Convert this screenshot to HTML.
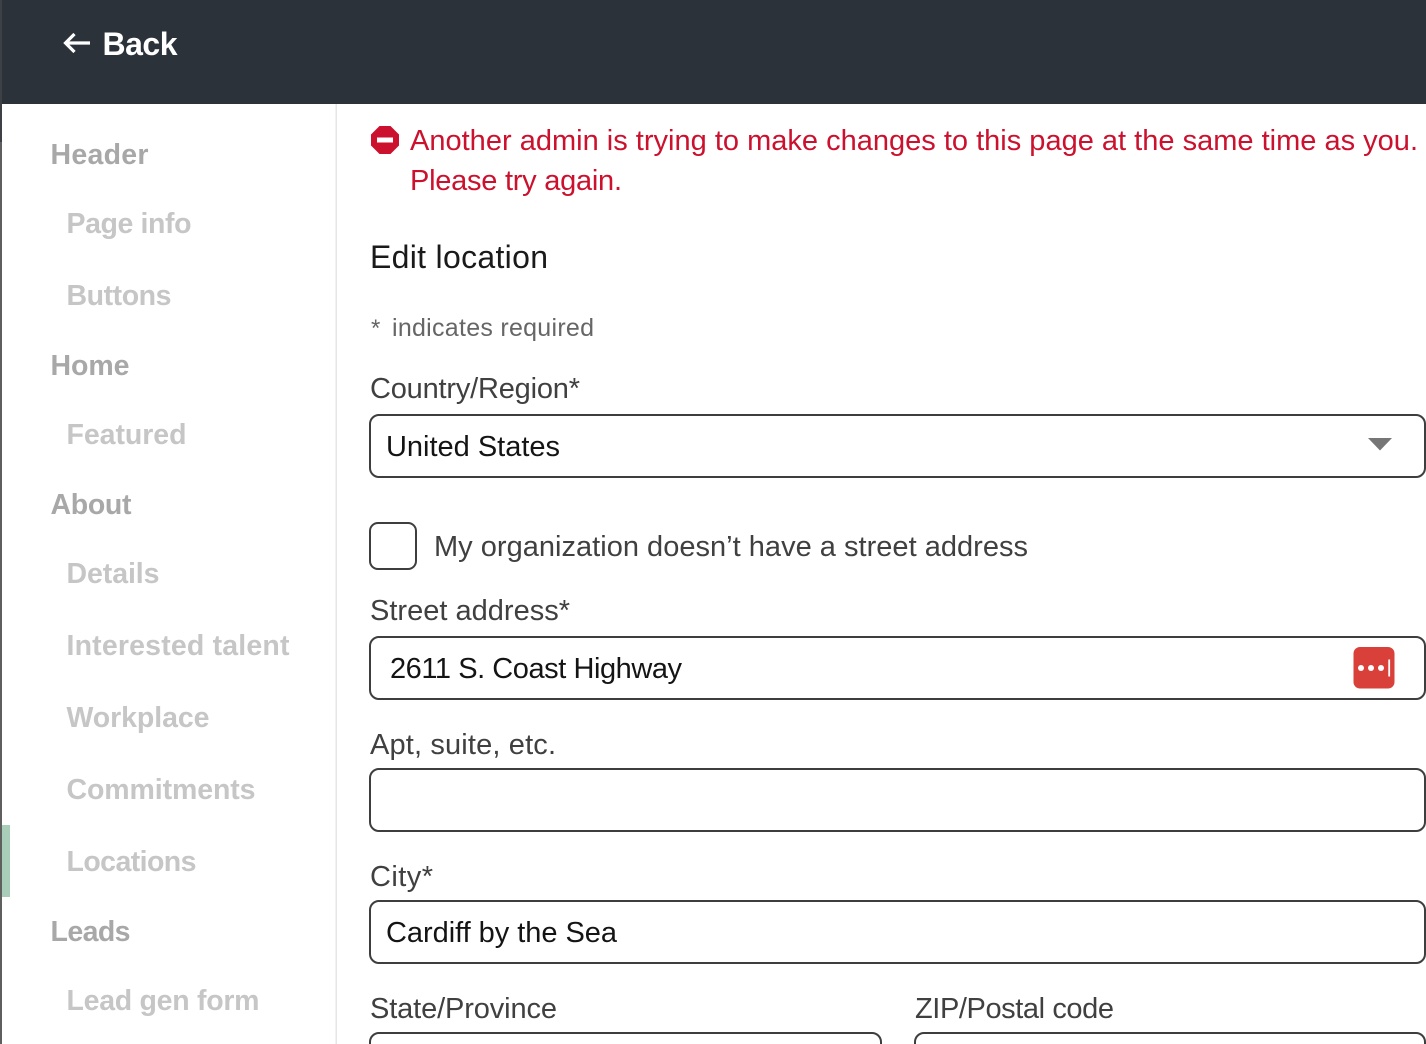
<!DOCTYPE html>
<html>
<head>
<meta charset="utf-8">
<style>
html,body{margin:0;padding:0;background:#fff;width:1426px;height:1044px;overflow:hidden}
svg{display:block;position:absolute;left:0;top:0}
text{font-family:"Liberation Sans",sans-serif;white-space:pre}
.b{font-weight:700;font-size:28.5px}
.h{fill:#a8a8a8}
.s{fill:#c6c6c6}
.t{font-size:29px}
.l{fill:#404040}
.v{fill:#141414}
.e{fill:#cb112d}
.box{fill:#fff;stroke:#3e3e3e;stroke-width:2}
</style>
</head>
<body>
<svg width="1426" height="1044" viewBox="0 0 1426 1044" xmlns="http://www.w3.org/2000/svg">
<rect x="0" y="0" width="1426" height="1044" fill="#fff"/>
<rect x="0" y="104" width="2" height="940" fill="#5f5f5f"/>
<rect x="0" y="0" width="2" height="142" fill="#3d4045"/>
<rect x="2" y="0" width="1424" height="104" fill="#2c323a"/>
<rect x="335.500" y="104" width="1.500" height="940" fill="#e6e6e6"/>
<rect x="2" y="825" width="8" height="72" fill="#a8cdb9"/>

<path d="M65.500 43H90M74.500 34L65.500 43L74.500 52" fill="none" stroke="#fff" stroke-width="3.200"/>
<text x="102.500" y="55" class="b" style="font-size:32px" fill="#fff" textLength="75">Back</text>

<text x="50.500" y="164" class="b h" textLength="98">Header</text>
<text x="66.500" y="233" class="b s" textLength="125">Page info</text>
<text x="66.500" y="305" class="b s" textLength="105">Buttons</text>
<text x="50.500" y="375" class="b h" textLength="79">Home</text>
<text x="66.500" y="444" class="b s" textLength="120">Featured</text>
<text x="50.500" y="514" class="b h" textLength="81">About</text>
<text x="66.500" y="583" class="b s" textLength="93">Details</text>
<text x="66.500" y="655" class="b s" textLength="223">Interested talent</text>
<text x="66.500" y="727" class="b s" textLength="143">Workplace</text>
<text x="66.500" y="799" class="b s" textLength="189">Commitments</text>
<text x="66.500" y="871" class="b s" textLength="130">Locations</text>
<text x="50.500" y="941" class="b h" textLength="80">Leads</text>
<text x="66.500" y="1010" class="b s" textLength="193">Lead gen form</text>

<polygon points="379.500,126 390.500,126 399,134.500 399,145.500 390.500,154 379.500,154 371,145.500 371,134.500" fill="#cb112d"/>
<rect x="377" y="137.500" width="16" height="5" fill="#fff"/>
<text x="410" y="150" class="t e" textLength="1008">Another admin is trying to make changes to this page at the same time as you.</text>
<text x="410" y="190" class="t e" textLength="212">Please try again.</text>

<text x="370" y="268" style="font-size:32px" fill="#1a1a1a" textLength="178">Edit location</text>
<text x="371" y="336" style="font-size:24px" fill="#666" textLength="9">*</text>
<text x="392" y="336" style="font-size:25px" fill="#666" textLength="202">indicates required</text>

<text x="370" y="398" class="t l" textLength="210">Country/Region*</text>
<rect x="370" y="415" width="1055" height="62" rx="9" class="box"/>
<text x="386" y="456" class="t v" textLength="174">United States</text>
<polygon points="1368,438 1392,438 1380,450.500" fill="#767676"/>

<rect x="370" y="523" width="46" height="46" rx="8" class="box"/>
<text x="434" y="556" class="t l" textLength="594">My organization doesn’t have a street address</text>

<text x="370" y="620" class="t l" textLength="200">Street address*</text>
<rect x="370" y="637" width="1055" height="62" rx="9" class="box"/>
<text x="390" y="678" class="t v" textLength="292">2611 S. Coast Highway</text>
<rect x="1353.500" y="647" width="41" height="41.500" rx="6.500" fill="#d9403a"/>
<circle cx="1361" cy="668" r="3" fill="#fff"/>
<circle cx="1371" cy="668" r="3" fill="#fff"/>
<circle cx="1381" cy="668" r="3" fill="#fff"/>
<rect x="1388.300" y="659.500" width="1.800" height="17" fill="#fff"/>

<text x="370" y="754" class="t l" textLength="186">Apt, suite, etc.</text>
<rect x="370" y="769" width="1055" height="62" rx="9" class="box"/>

<text x="370" y="886" class="t l" textLength="63">City*</text>
<rect x="370" y="901" width="1055" height="62" rx="9" class="box"/>
<text x="386" y="942" class="t v" textLength="231">Cardiff by the Sea</text>

<text x="370" y="1018" class="t l" textLength="187">State/Province</text>
<text x="915" y="1018" class="t l" textLength="199">ZIP/Postal code</text>
<rect x="370" y="1033" width="511" height="62" rx="9" class="box"/>
<rect x="915" y="1033" width="510" height="62" rx="9" class="box"/>
</svg>
</body>
</html>
